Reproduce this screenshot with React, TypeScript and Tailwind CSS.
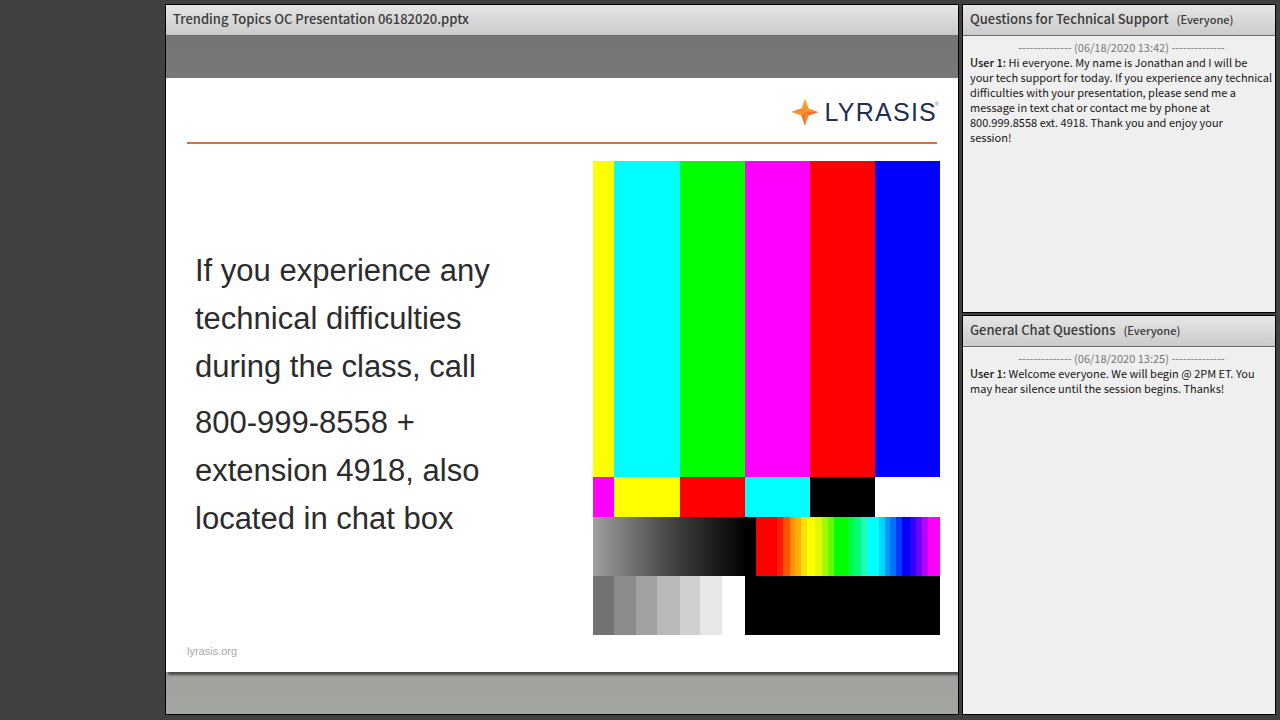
import type { ReactNode } from "react";

interface Message {
  author: string;
  text: string;
}

interface ChatPodProps {
  title: string;
  stamp: string;
  messages: Message[];
}

const UI_FONT = "font-['Noto_Sans_CJK_SC','Noto_Sans',sans-serif]";
const SLIDE_FONT = "font-['Liberation_Sans',Arial,sans-serif]";

const TOP_BARS = [
  { x: 0, w: 21, fill: "#ffff00" },
  { x: 21, w: 66, fill: "#00ffff" },
  { x: 87, w: 65, fill: "#00ff00" },
  { x: 152, w: 65, fill: "#ff00ff" },
  { x: 217, w: 65, fill: "#ff0000" },
  { x: 282, w: 65, fill: "#0000ff" },
];

const MID_BARS = [
  { x: 0, w: 21, fill: "#ff00ff" },
  { x: 21, w: 66, fill: "#ffff00" },
  { x: 87, w: 65, fill: "#ff0000" },
  { x: 152, w: 65, fill: "#00ffff" },
  { x: 217, w: 65, fill: "#000000" },
];

const SPECTRUM = [
  { x: 163, w: 21, fill: "#ff0000" },
  { x: 184, w: 6, fill: "#ff1c00" },
  { x: 190, w: 7, fill: "#ff5500" },
  { x: 197, w: 5, fill: "#ff9000" },
  { x: 202, w: 6, fill: "#ffae00" },
  { x: 208, w: 6, fill: "#ffe000" },
  { x: 214, w: 8, fill: "#ffff00" },
  { x: 222, w: 7, fill: "#e0fa00" },
  { x: 229, w: 6, fill: "#a4f800" },
  { x: 235, w: 6, fill: "#60ff00" },
  { x: 241, w: 14, fill: "#00ff00" },
  { x: 255, w: 6, fill: "#00ff40" },
  { x: 261, w: 7, fill: "#00ff7c" },
  { x: 268, w: 6, fill: "#20ffb4" },
  { x: 274, w: 12, fill: "#00ffff" },
  { x: 286, w: 6, fill: "#00d4ff" },
  { x: 292, w: 5, fill: "#009cff" },
  { x: 297, w: 6, fill: "#0070ff" },
  { x: 303, w: 6, fill: "#0038ff" },
  { x: 309, w: 8, fill: "#0000ff" },
  { x: 317, w: 6, fill: "#3000ff" },
  { x: 323, w: 6, fill: "#7000ff" },
  { x: 329, w: 6, fill: "#c000ff" },
  { x: 335, w: 12, fill: "#ff00ff" },
];

const GRAYS = [
  { x: 0, w: 21, fill: "#737373" },
  { x: 21, w: 22, fill: "#8b8b8b" },
  { x: 43, w: 21, fill: "#a2a2a2" },
  { x: 64, w: 23, fill: "#b9b9b9" },
  { x: 87, w: 20, fill: "#d0d0d0" },
  { x: 107, w: 22, fill: "#e7e7e7" },
];

function TestPattern() {
  return (
    <svg viewBox="0 0 347 474" className="block w-full" shapeRendering="crispEdges" role="img" aria-label="Color bars">
      <defs>
        <linearGradient id="ramp">
          <stop offset="0" stopColor="#a0a0a0" />
          <stop offset="0.25" stopColor="#6e6e6e" />
          <stop offset="0.5" stopColor="#404040" />
          <stop offset="0.94" stopColor="#000" />
        </linearGradient>
      </defs>
      {TOP_BARS.map((b) => (
        <rect key={b.x} x={b.x} y="0" width={b.w} height="316" fill={b.fill} />
      ))}
      {MID_BARS.map((b) => (
        <rect key={b.x} x={b.x} y="316" width={b.w} height="40" fill={b.fill} />
      ))}
      <rect x="0" y="356" width="163" height="59" fill="url(#ramp)" />
      {SPECTRUM.map((b) => (
        <rect key={b.x} x={b.x} y="356" width={b.w} height="59" fill={b.fill} />
      ))}
      {GRAYS.map((b) => (
        <rect key={b.x} x={b.x} y="415" width={b.w} height="59" fill={b.fill} />
      ))}
      <rect x="152" y="415" width="195" height="59" fill="#000" />
    </svg>
  );
}

function Logo() {
  return (
    <div className="relative flex h-7 items-center gap-1.5">
      <svg viewBox="0 0 28 28" className="size-7">
        <defs>
          <linearGradient id="star" x1="0.3" y1="0" x2="0.6" y2="1">
            <stop offset="0" stopColor="#fbb034" />
            <stop offset="0.5" stopColor="#f8952a" />
            <stop offset="1" stopColor="#f27a30" />
          </linearGradient>
        </defs>
        <path d="M14 0.5 L17.6 10.4 L27.5 14 L17.6 17.6 L14 27.5 L10.4 17.6 L0.5 14 L10.4 10.4Z" fill="url(#star)" />
        <path d="M0.5 14 L10.4 10.4 L14 14Z" fill="#f68a3a" />
        <path d="M10.4 17.6 L14 14 L14 27.5Z" fill="#f4713a" />
        <path d="M27.5 14 L17.6 17.6 L14 14Z" fill="#ee7434" />
      </svg>
      <span className="text-[25px] leading-7 tracking-wider text-[#1d2f55]">LYRASIS</span>
      <span className="absolute top-0.5 -right-0.5 text-[6px] leading-2 text-[#6f7a94]">®</span>
    </div>
  );
}

function PodHeader({ children }: { children: ReactNode }) {
  return (
    <header className="flex h-[31px] shrink-0 items-center gap-2 border-b border-[#6b6b6b] bg-linear-to-b from-[#e6e6e6] to-[#cbcbcb] px-[7px] pb-0.5 text-[#3a3a3a]">
      {children}
    </header>
  );
}

function ChatPod({ title, stamp, messages }: ChatPodProps) {
  return (
    <section className="flex min-h-0 flex-col border border-black bg-[#efefef]">
      <PodHeader>
        <h2 className="text-[13px] font-medium whitespace-nowrap">{title}</h2>
        <span className="text-[11px] font-medium">(Everyone)</span>
      </PodHeader>
      <div className="pt-1 pr-0.5 pl-[7px] text-[11px] leading-[15px] text-[#161616]">
        <p className="text-center text-[#777]">
          -------------- ({stamp}) --------------
        </p>
        {messages.map((m) => (
          <p key={m.text} className="whitespace-pre-line">
            <b className="font-medium">{m.author}:</b> {m.text}
          </p>
        ))}
      </div>
    </section>
  );
}

function Slide() {
  return (
    <article className={`flex aspect-[4/3] flex-col bg-white shadow-[2px_3px_2px_#4c4f4b] ${SLIDE_FONT}`}>
      <div className="mx-[21px] flex justify-end border-b-2 border-[#d5703f] pt-5 pb-4">
        <Logo />
      </div>
      <div className="mt-[17px] flex justify-between pr-[18px] pl-[29px]">
        <div className="flex w-[320px] flex-col gap-2 pt-[86px] text-[31px] leading-[48px] text-[#2b2b2d]">
          <p>If you experience any technical difficulties during the class, call</p>
          <p>
            800-999-8558 +<br />
            extension 4918, also located in chat box
          </p>
        </div>
        <div className="w-[347px]">
          <TestPattern />
        </div>
      </div>
      <a href="#" className="mx-[21px] mt-2 self-start text-[11px] leading-4 text-[#a8a8a8]">
        lyrasis.org
      </a>
    </article>
  );
}

export default function App() {
  return (
    <div className={`flex min-h-screen bg-[#404040] pt-1 pr-1 pb-[5px] ${UI_FONT}`}>
      <div className="w-[165px] shrink-0" />
      <main className="mr-[3px] flex min-w-0 flex-1 flex-col border border-black">
        <PodHeader>
          <h1 className="text-[13px] font-medium whitespace-nowrap">Trending Topics OC Presentation 06182020.pptx</h1>
        </PodHeader>
        <div className="flex flex-1 flex-col justify-center overflow-hidden bg-linear-to-b from-[#737672] to-[#a2a5a0]">
          <Slide />
        </div>
      </main>
      <aside className="grid w-[314px] shrink-0 grid-rows-[17fr_22fr] gap-0.5">
        <ChatPod
          title="Questions for Technical Support"
          stamp="06/18/2020 13:42"
          messages={[
            {
              author: "User 1",
              text: "Hi everyone. My name is Jonathan and I will be\nyour tech support for today. If you experience any technical\ndifficulties with your presentation, please send me a\nmessage in text chat or contact me by phone at\n800.999.8558 ext. 4918. Thank you and enjoy your\nsession!",
            },
          ]}
        />
        <ChatPod
          title="General Chat Questions"
          stamp="06/18/2020 13:25"
          messages={[
            {
              author: "User 1",
              text: "Welcome everyone. We will begin @ 2PM ET. You\nmay hear silence until the session begins. Thanks!",
            },
          ]}
        />
      </aside>
    </div>
  );
}
